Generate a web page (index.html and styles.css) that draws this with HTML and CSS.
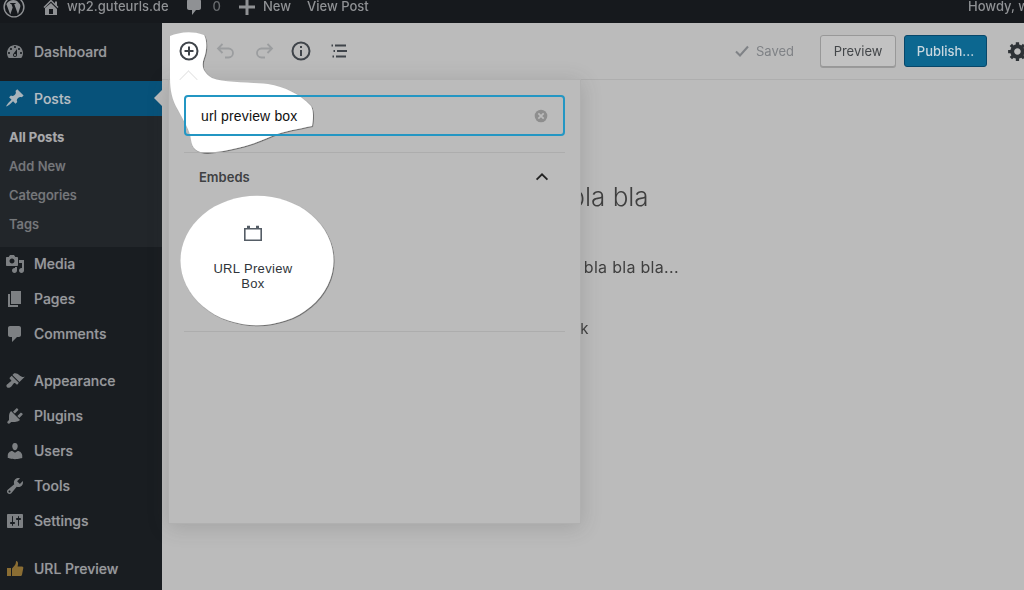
FILE: index.html
```html
<!DOCTYPE html>
<html lang="en">
<head>
<meta charset="utf-8">
<title>Edit Post</title>
<link rel="stylesheet" href="styles.css">
</head>
<body>
<header class="adminbar">
  <svg class="bar-icon logo" viewBox="0 0 20 20"><circle cx="10" cy="10" r="9" fill="none" stroke="currentColor" stroke-width="1.3"/><path fill="currentColor" d="M3 7.200l3.600 9.600 2.200-6.400-1.200-3.200H6.600V6.300h4.800v.9h-1.200l3.400 9.400 2.100-6.500c.5-1.600-.3-2.900-1.300-3.800-1.300-2.300-5-3.400-8-1.900C5 5.100 4 6 3 7.200z"/></svg>
  <svg class="bar-icon home" viewBox="0 0 20 20"><path fill="currentColor" d="M16 8.500l1.530 1.530-1.060 1.060L10 4.620l-6.470 6.470-1.060-1.060L10 2.500l4 4v-2h2v4zm-6-2.460l6 5.990V18H4v-6.970zM12 17v-5H8v5h4z"/></svg>
  <span class="bar-text site">wp2.guteurls.de</span>
  <svg class="bar-icon bubble" viewBox="0 0 20 20"><path fill="currentColor" d="M5 2h10c1.100 0 2 .9 2 2v7c0 1.100-.9 2-2 2h-3l-4 5v-5H5c-1.100 0-2-.9-2-2V4c0-1.100.9-2 2-2z"/></svg>
  <span class="bar-text count">0</span>
  <svg class="bar-icon plus" viewBox="0 0 20 20"><path fill="currentColor" d="M18 8.500v3h-6.500V18h-3v-6.500H2v-3h6.500V2h3v6.500z"/></svg>
  <span class="bar-text new">New</span>
  <span class="bar-text view">View Post</span>
  <span class="bar-text howdy">Howdy, w</span>
</header>

<div class="shell">
  <nav class="sidebar">
    <ul class="menu first">
      <li class="menu-item"><svg class="menu-icon" viewBox="0 0 20 20"><path fill="currentColor" d="M3.760 16h12.480c1.100-1.370 1.760-3.110 1.760-5 0-4.420-3.580-8-8-8s-8 3.580-8 8c0 1.890.66 3.630 1.760 5zM10 4c.55 0 1 .45 1 1s-.45 1-1 1-1-.45-1-1 .45-1 1-1zM6 6c.55 0 1 .45 1 1s-.45 1-1 1-1-.45-1-1 .45-1 1-1zm8 0c.55 0 1 .45 1 1s-.45 1-1 1-1-.45-1-1 .45-1 1-1zm-5.370 5.550L12 7v6c0 1.100-.9 2-2 2s-2-.9-2-2c0-.57.24-1.080.63-1.450zM4 10c.55 0 1 .45 1 1s-.45 1-1 1-1-.45-1-1 .45-1 1-1zm12 0c.55 0 1 .45 1 1s-.45 1-1 1-1-.45-1-1 .45-1 1-1zm-5 3c0-.55-.45-1-1-1s-1 .45-1 1 .45 1 1 1 1-.45 1-1z"/></svg>Dashboard</li>
    </ul>
    <ul class="menu">
      <li class="menu-item current"><svg class="menu-icon" viewBox="0 0 20 20"><path fill="currentColor" d="M10.440 3.020l1.820-1.820 6.360 6.350-1.830 1.820c-1.050-.68-2.480-.57-3.410.36l-.75.75c-.92.93-1.040 2.350-.35 3.410l-1.830 1.820-2.410-2.410-2.800 2.790c-.42.42-3.380 2.710-3.800 2.290s1.860-3.390 2.280-3.810l2.790-2.790L4.100 9.360l1.830-1.820c1.050.69 2.480.57 3.400-.36l.75-.75c.93-.92 1.050-2.350.36-3.410z"/></svg>Posts</li>
    </ul>
    <ul class="submenu">
      <li class="sub-item active">All Posts</li>
      <li class="sub-item">Add New</li>
      <li class="sub-item">Categories</li>
      <li class="sub-item">Tags</li>
    </ul>
    <ul class="menu after-sub">
      <li class="menu-item"><svg class="menu-icon" viewBox="0 0 20 20"><path fill="currentColor" d="M13 11V4c0-.55-.45-1-1-1h-1.670L9 1H5L3.670 3H2c-.55 0-1 .45-1 1v7c0 .55.45 1 1 1h10c.55 0 1-.45 1-1zM7 4.500c1.380 0 2.500 1.120 2.500 2.500S8.380 9.500 7 9.500 4.500 8.380 4.500 7 5.620 4.500 7 4.500zM14 6h5v10.500c0 1.380-1.120 2.500-2.500 2.500S14 17.880 14 16.500s1.120-2.500 2.500-2.500c.17 0 .34.02.5.05V9h-3V6zm-4 8.050V13h2v3.500c0 1.380-1.120 2.500-2.500 2.500S7 17.880 7 16.500 8.120 14 9.500 14c.17 0 .34.02.5.05z"/></svg>Media</li>
      <li class="menu-item"><svg class="menu-icon" viewBox="0 0 20 20"><path fill="currentColor" d="M6 15V2h10v13H6zm-1 1h8v2H3V5h2v11z"/></svg>Pages</li>
      <li class="menu-item"><svg class="menu-icon" viewBox="0 0 20 20"><path fill="currentColor" d="M5 2h9c1.100 0 2 .9 2 2v7c0 1.100-.9 2-2 2h-2l-5 5v-5H5c-1.100 0-2-.9-2-2V4c0-1.100.9-2 2-2z"/></svg>Comments</li>
    </ul>
    <ul class="menu">
      <li class="menu-item"><svg class="menu-icon" viewBox="0 0 20 20"><path fill="currentColor" d="M14.480 11.060L7.410 3.990l1.500-1.500c.5-.56 2.300-.47 3.510.32 1.210.8 1.430 1.280 2.910 2.100 1.180.64 2.450 1.260 4.450.85zm-.71.71L6.700 4.700 4.930 6.470c-.39.39-.39 1.020 0 1.410l1.060 1.060c.39.39.39 1.030 0 1.420-.6.6-1.430 1.110-2.210 1.690-.35.26-.7.53-1.010.84C1.430 13.230.9 15.130 2 16.230c1.110 1.100 3 .57 4.340-.77.31-.31.58-.66.84-1.010.58-.78 1.090-1.610 1.690-2.210.39-.39 1.020-.39 1.410 0l1.060 1.060c.39.39 1.020.39 1.410 0z"/></svg>Appearance</li>
      <li class="menu-item"><svg class="menu-icon" viewBox="0 0 20 20"><path fill="currentColor" d="M13.110 4.360L9.870 7.600 8 5.730l3.240-3.240c.35-.34 1.050-.2 1.560.32.52.51.66 1.210.31 1.550zm-8 1.770l.91-1.120 9.010 9.010-1.190.84c-.71.71-2.630 1.160-3.820 1.160H6.140L4.900 17.260c-.59.59-1.540.59-2.120 0-.59-.58-.59-1.530 0-2.120l1.240-1.240v-3.880c0-1.130.4-3.190 1.090-3.890zm7.260 3.970l3.240-3.240c.34-.35 1.040-.21 1.550.31.52.51.66 1.210.31 1.550l-3.240 3.250z"/></svg>Plugins</li>
      <li class="menu-item"><svg class="menu-icon" viewBox="0 0 20 20"><path fill="currentColor" d="M10 9.250c-2.270 0-2.730-3.440-2.730-3.440C7 4.020 7.820 2 9.970 2c2.160 0 2.980 2.020 2.710 3.810 0 0-.41 3.440-2.680 3.440zm0 2.570L12.720 10c2.390 0 4.520 2.330 4.520 4.530v2.490s-3.650 1.130-7.240 1.130c-3.650 0-7.240-1.130-7.240-1.130v-2.490c0-2.250 1.940-4.480 4.470-4.480z"/></svg>Users</li>
      <li class="menu-item"><svg class="menu-icon" viewBox="0 0 20 20"><path fill="currentColor" d="M16.680 9.770c-1.340 1.340-3.300 1.670-4.950.99l-5.410 6.520c-.99.99-2.590.99-3.580 0s-.99-2.590 0-3.570l6.520-5.420c-.68-1.650-.35-3.610.99-4.950 1.280-1.280 3.120-1.620 4.720-1.060l-2.890 2.890 2.820 2.820 2.860-2.870c.53 1.580.18 3.390-1.080 4.650zM3.810 16.210c.4.39 1.040.39 1.430 0 .4-.4.4-1.040 0-1.430-.39-.4-1.030-.4-1.430 0-.39.39-.39 1.030 0 1.430z"/></svg>Tools</li>
      <li class="menu-item"><svg class="menu-icon" viewBox="0 0 20 20"><path fill="currentColor" d="M18 16V4c0-.55-.45-1-1-1H3c-.55 0-1 .45-1 1v12c0 .55.45 1 1 1h14c.55 0 1-.45 1-1zM8 11h1c.55 0 1 .45 1 1s-.45 1-1 1H8v1.500c0 .28-.22.5-.5.5s-.5-.22-.5-.5V13H6c-.55 0-1-.45-1-1s.45-1 1-1h1V5.500c0-.28.22-.5.5-.5s.5.22.5.5V11zm5-2h-1c-.55 0-1-.45-1-1s.45-1 1-1h1V5.500c0-.28.22-.5.5-.5s.5.22.5.5V7h1c.55 0 1 .45 1 1s-.45 1-1 1h-1v5.500c0 .28-.22.5-.5.5s-.5-.22-.5-.5V9z"/></svg>Settings</li>
    </ul>
    <ul class="menu last">
      <li class="menu-item"><svg class="menu-icon thumb" viewBox="0 0 20 20"><path fill="currentColor" d="M2 10h4v8H2zM7 10.500l3-3.500c.6-.9.9-2 1-4 1.600 0 2.300 1.300 2 3.200L12.600 8.500H17c1 0 1.500.8 1.300 1.600l-1.300 6.600c-.2.8-.8 1.300-1.600 1.300H7z"/></svg>URL Preview</li>
    </ul>
  </nav>

  <main class="editor">
    <div class="toolbar">
      <div class="tools-left">
        <svg class="tool on" viewBox="0 0 24 24"><circle cx="12" cy="12" r="8.500" fill="none" stroke="currentColor" stroke-width="2"/><path fill="none" stroke="currentColor" stroke-width="2" d="M12 7.500v9M7.500 12h9"/></svg>
        <svg class="tool off" viewBox="0 0 24 24"><path fill="none" stroke="currentColor" stroke-width="1.800" d="M8.500 5L4 9.500 8.500 14M4 9.500h10.500a4.500 4.500 0 0 1 0 9H11"/></svg>
        <svg class="tool off" viewBox="0 0 24 24"><path fill="none" stroke="currentColor" stroke-width="1.800" d="M15.500 5L20 9.500 15.500 14M20 9.500H9.500a4.500 4.500 0 0 0 0 9H13"/></svg>
        <svg class="tool dark" viewBox="0 0 24 24"><circle cx="12" cy="12" r="8.500" fill="none" stroke="currentColor" stroke-width="2"/><path fill="none" stroke="currentColor" stroke-width="2" d="M12 11v6M12 7v2"/></svg>
        <svg class="tool dark" viewBox="0 0 24 24"><path fill="none" stroke="currentColor" stroke-width="1.800" d="M8 6.500h11M10 12h10M9 17.500h10M4.500 6.500h1.500M6.500 12h1.500M5.500 17.500H7"/></svg>
      </div>
      <div class="tools-right">
        <span class="saved"><svg class="check" viewBox="0 0 20 20"><path fill="none" stroke="currentColor" stroke-width="2" d="M4 10.500l4 4 8-9"/></svg>Saved</span>
        <span class="btn preview">Preview</span>
        <span class="btn publish">Publish...</span>
        <svg class="gear" viewBox="0 0 20 20"><path fill="currentColor" d="M18 12h-2.180c-.17.7-.44 1.350-.81 1.930l1.540 1.540-2.100 2.100-1.540-1.540c-.58.36-1.230.63-1.910.79V19H8v-2.180c-.68-.16-1.330-.43-1.910-.79l-1.540 1.540-2.120-2.120 1.540-1.540c-.36-.58-.63-1.230-.79-1.910H1V9.030h2.170c.16-.7.44-1.350.8-1.940L2.430 5.550l2.100-2.100 1.540 1.540c.58-.37 1.240-.64 1.930-.81V2h3v2.180c.68.16 1.330.43 1.910.79l1.540-1.540 2.120 2.120-1.540 1.540c.36.59.64 1.240.8 1.940H18V12zm-8.500 1.500c1.660 0 3-1.340 3-3s-1.340-3-3-3-3 1.340-3 3 1.340 3 3 3z"/></svg>
      </div>
    </div>

    <article class="post">
      <h1 class="post-title">bla bla bla</h1>
      <p class="post-text">bla bla bla... bla bla bla...</p>
      <p class="post-link">link</p>
    </article>
  </main>
</div>

<section class="popover">
  <span class="pop-arrow"></span>
  <div class="search"><span class="search-text">url preview box</span>
    <svg class="clear" viewBox="0 0 20 20"><circle cx="10" cy="10" r="7" fill="currentColor"/><path fill="none" stroke="#bbbbbb" stroke-width="2" d="M7 7l6 6M13 7l-6 6"/></svg>
  </div>
  <div class="group">
    <div class="group-head"><span class="group-name">Embeds</span>
      <svg class="chevron" viewBox="0 0 20 20"><path fill="none" stroke="currentColor" stroke-width="2" d="M4 13l6-6 6 6"/></svg>
    </div>
    <div class="block-item">
      <svg class="block-icon" viewBox="0 0 20 20"><path fill="none" stroke="currentColor" stroke-width="1.600" d="M1.800 5.800h16.400v11.400H1.800z"/><path fill="currentColor" d="M4 2.800h3v2.500H4zM13 2.800h3v2.500h-3z"/></svg>
      <span class="block-label">URL Preview Box</span>
    </div>
  </div>
</section>

<svg class="marks" viewBox="0 0 1024 590" aria-hidden="true">
  <defs><filter id="edge" x="-5%" y="-5%" width="110%" height="110%"><feDropShadow dx="0.800" dy="0.800" stdDeviation="0.700" flood-color="#333" flood-opacity=".7"/></filter></defs>
  <path class="blob" filter="url(#edge)" d="M170 36C178 33 190 30 204 35C207 40 207 50 204 58C201 66 203 72 212 78C225 83 250 82 268 84C285 87 300 94 311 106C314 112 313 120 312 126C298 129 284 131 272 136C256 143 238 150 207 153C197 153 192 148 191 140C190 130 184 122 178 110C172 100 170 90 170 78Z"/>
  <ellipse class="blob" filter="url(#edge)" cx="257" cy="260.500" rx="76.500" ry="64.800"/>
</svg>
</body>
</html>
```
FILE: styles.css
```css
* { box-sizing: border-box; }
html, body { margin: 0; height: 100%; }
body {
  width: 1024px;
  height: 590px;
  overflow: hidden;
  position: relative;
  background: #bbbbbb;
  font-family: Inter, "Liberation Sans", sans-serif;
  color: #333;
}
ul { list-style: none; margin: 0; padding: 0; }

.adminbar {
  height: 23px;
  background: #16191d;
  color: #8f9194;
  display: flex;
  align-items: center;
  padding: 0 0 10px 3px;
  overflow: hidden;
  font-size: 13px;
  line-height: 13px;
  font-weight: 500;
}
.adminbar > * { filter: blur(.3px); }
.bar-icon { flex: none; width: 20px; height: 20px; }
.logo { width: 22px; height: 22px; }
.home { margin-left: 16px; }
.bubble { margin-left: 15px; }
.plus { margin-left: 16px; }
.site { margin-left: 6px; }
.count { margin-left: 9px; color: #66696c; }
.new { margin-left: 6px; }
.view { margin-left: 16px; }
.howdy { margin-left: auto; margin-right: -5px; flex: none; }
.bar-text { white-space: nowrap; }

.shell { display: flex; height: 567px; }

.sidebar {
  width: 162px;
  flex: none;
  background: #191d21;
  color: #97999c;
  padding-top: 11px;
  font-size: 14px;
  font-weight: 500;
}
.menu + .menu { margin-top: 12px; }
.menu.last { margin-top: 12.500px; }
.submenu + .menu { margin-top: 0; }
.menu-item {
  height: 35px;
  display: flex;
  align-items: center;
  gap: 9px;
  padding-left: 5px;
  position: relative;
  text-shadow: 0 0 1px rgba(151, 153, 156, .45);
}
.menu-icon { width: 20px; height: 20px; flex: none; color: #7d8083; filter: blur(.3px); }
.thumb { color: #8a6d33; }
.current { background: #07527a; color: #b5bec4; padding-bottom: 1px; }
.current .menu-icon { color: #a9b4bb; }
.current::after {
  content: "";
  position: absolute;
  right: 0;
  top: 9px;
  border: 8px solid transparent;
  border-left: 0;
  border-right-color: #bbbbbb;
}
.submenu {
  background: #22262a;
  padding: 6.500px 0 8.500px;
  font-size: 13px;
  color: #76787b;
  margin-bottom: -1px;
}
.sub-item { height: 29px; line-height: 29px; padding-left: 9px; text-shadow: 0 0 1px rgba(118, 120, 123, .45); }
.active { color: #a8a9ab; font-weight: 700; }

.editor { flex: 1; min-width: 0; position: relative; overflow: hidden; }

.toolbar {
  height: 57px;
  border-bottom: 1px solid #aeaeae;
  display: flex;
  align-items: center;
  justify-content: space-between;
}
.tools-left {
  display: flex;
  align-items: center;
  gap: 13.500px;
  padding-left: 14.500px;
  position: relative;
  z-index: 3;
}
.tool { width: 24px; height: 24px; flex: none; }
.tool.on, .tool.dark { color: #3f444a; }
.tool.off { color: #9b9d9f; }
.tools-right { display: flex; align-items: center; margin-right: -5px; filter: blur(.3px); }
.saved {
  display: flex;
  align-items: center;
  gap: 4px;
  font-size: 13px;
  color: #7f8286;
  margin-right: 26px;
}
.check { width: 20px; height: 20px; color: #7f8286; }
.btn {
  height: 32px;
  display: flex;
  align-items: center;
  justify-content: center;
  font-size: 13px;
  border-radius: 3px;
}
.preview {
  width: 76px;
  background: #c2c2c2;
  border: 1px solid #989898;
  box-shadow: 0 1px 0 #9a9a9a;
  color: #44474a;
}
.publish {
  width: 83px;
  margin-left: 8px;
  background: #0c6790;
  border: 1px solid #07476a;
  color: #c9d7df;
  font-weight: 500;
}
.gear { width: 22px; height: 22px; margin-left: 20px; color: #2e3236; flex: none; }

.post { color: #3f3f3f; filter: blur(.3px); }
.post-title { margin: 101px 0 0 364px; font-size: 26px; line-height: 32px; font-weight: 300; white-space: nowrap; }
.post-text { margin: 44px 0 0 322px; font-size: 16px; letter-spacing: .3px; line-height: 20px; white-space: nowrap; }
.post-link { margin: 42px 0 0 402px; font-size: 15px; line-height: 20px; }

.popover {
  position: absolute;
  left: 168px;
  top: 79px;
  width: 413px;
  height: 445px;
  background: #bbbbbb;
  border: 1px solid #b0b0b0;
  box-shadow: 0 3px 20px rgba(60, 60, 60, .2);
  padding: 15px 15px 0;
}
.pop-arrow {
  position: absolute;
  left: 13px;
  top: -7px;
  width: 13px;
  height: 13px;
  transform: rotate(45deg);
  background: #fff;
  border: 1px solid #e6e6e6;
  border-right: 0;
  border-bottom: 0;
  z-index: 3;
}
.search {
  height: 41px;
  border: 2px solid #2396c3;
  border-radius: 4px;
  display: flex;
  align-items: center;
  justify-content: space-between;
  padding: 0 13px 0 15px;
  position: relative;
  z-index: 3;
  font-family: "Liberation Sans", Arial, sans-serif;
  font-size: 14px;
  letter-spacing: .15px;
  color: #111;
}
.clear { width: 18px; height: 18px; color: #8e8e8e; }
.group {
  margin-top: 16px;
  height: 180px;
  border-top: 1px solid #adadad;
  border-bottom: 1px solid #adadad;
  position: relative;
  z-index: 3;
}
.group-head {
  display: flex;
  align-items: center;
  justify-content: space-between;
  height: 47px;
  padding: 0 14px 0 15px;
  font-size: 13px;
  font-weight: 600;
  color: #3f4143;
}
.chevron { width: 18px; height: 18px; color: #222; }
.block-item {
  width: 96px;
  margin: 23px 0 0 21px;
  display: flex;
  flex-direction: column;
  align-items: center;
  text-align: center;
  gap: 18px;
}
.block-icon { width: 20px; height: 20px; color: #555d66; }
.block-label {
  font-family: "Liberation Sans", Arial, sans-serif;
  font-size: 13px;
  letter-spacing: .35px;
  line-height: 15px;
  color: #30353a;
  width: 90px;
}

.marks {
  position: absolute;
  left: 0;
  top: 0;
  width: 1024px;
  height: 590px;
  z-index: 2;
  pointer-events: none;
}
.blob { fill: #fff; }
```
